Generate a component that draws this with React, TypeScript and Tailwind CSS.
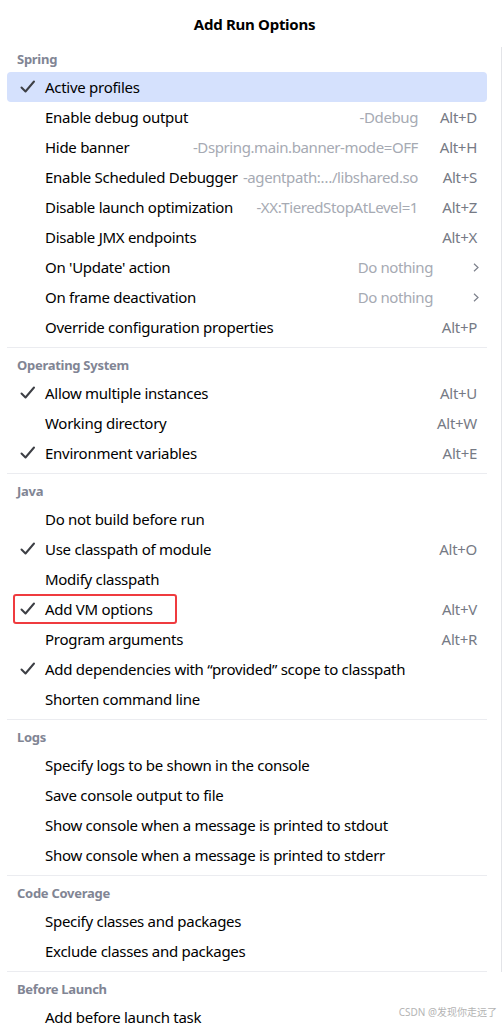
import type { ReactNode } from "react";

type Item = {
  label: ReactNode;
  checked?: boolean;
  hint?: string;
  shortcut?: string;
  submenu?: boolean;
  selected?: boolean;
  marked?: boolean;
};

type Section = { title: string; items: Item[] };

const SECTIONS: Section[] = [
  {
    title: "Spring",
    items: [
      { label: "Active profiles", checked: true, selected: true },
      { label: "Enable debug output", hint: "-Ddebug", shortcut: "Alt+D" },
      { label: "Hide banner", hint: "-Dspring.main.banner-mode=OFF", shortcut: "Alt+H" },
      { label: "Enable Scheduled Debugger", hint: "-agentpath:\u2026/libshared.so", shortcut: "Alt+S" },
      { label: "Disable launch optimization", hint: "-XX:TieredStopAtLevel=1", shortcut: "Alt+Z" },
      { label: "Disable JMX endpoints", shortcut: "Alt+X" },
      { label: "On 'Update' action", hint: "Do nothing", submenu: true },
      { label: "On frame deactivation", hint: "Do nothing", submenu: true },
      { label: "Override configuration properties", shortcut: "Alt+P" },
    ],
  },
  {
    title: "Operating System",
    items: [
      { label: "Allow multiple instances", checked: true, shortcut: "Alt+U" },
      { label: "Working directory", shortcut: "Alt+W" },
      { label: "Environment variables", checked: true, shortcut: "Alt+E" },
    ],
  },
  {
    title: "Java",
    items: [
      { label: "Do not build before run" },
      { label: "Use classpath of module", checked: true, shortcut: "Alt+O" },
      { label: "Modify classpath" },
      { label: "Add VM options", checked: true, shortcut: "Alt+V", marked: true },
      { label: "Program arguments", shortcut: "Alt+R" },
      { label: "Add dependencies with \u201cprovided\u201d scope to classpath", checked: true },
      { label: "Shorten command line" },
    ],
  },
  {
    title: "Logs",
    items: [
      { label: "Specify logs to be shown in the console" },
      { label: "Save console output to file" },
      { label: "Show console when a message is printed to stdout" },
      { label: "Show console when a message is printed to stderr" },
    ],
  },
  {
    title: "Code Coverage",
    items: [
      { label: "Specify classes and packages" },
      { label: "Exclude classes and packages" },
    ],
  },
  {
    title: "Before Launch",
    items: [{ label: "Add before launch task" }],
  },
];

function Check() {
  return (
    <svg width="16" height="14" viewBox="0 0 16 14" fill="none">
      <path d="M1.5 7.5 L5.5 11.5 L14 1.5" stroke="#3d3f45" strokeWidth="2" strokeLinecap="round" strokeLinejoin="round" />
    </svg>
  );
}

function Chevron() {
  return (
    <svg width="6" height="9" viewBox="0 0 6 9" fill="none">
      <path d="M1 0.8 L5 4.5 L1 8.2" stroke="#7d818c" strokeWidth="1.2" />
    </svg>
  );
}

function Row({ item }: { item: Item }) {
  return (
    <div
      className={`relative flex h-[30px] items-center rounded-[4px] pr-[10px] ${item.selected ? "bg-[#d5e1fd]" : ""}`}
    >
      <div className="flex w-[38px] shrink-0 justify-center pl-[4px]">{item.checked && <Check />}</div>
      <span className="min-w-0 flex-1 whitespace-nowrap text-black">{item.label}</span>
      {item.hint && (
        <span
          className={`shrink-0 whitespace-nowrap tracking-[-0.4px] text-[#a6aab3] ${item.submenu ? "mr-[40px]" : ""}`}
        >
          {item.hint}
        </span>
      )}
      {item.shortcut && (
        <span className="w-[59px] shrink-0 whitespace-nowrap text-right text-[#767a85]">{item.shortcut}</span>
      )}
      {item.submenu && (
        <span className="mr-[-2px] flex">
          <Chevron />
        </span>
      )}
      {item.marked && (
        <div className="pointer-events-none absolute left-[6px] top-0 h-[30px] w-[164px] rounded-[3px] border-[2.5px] border-[#ef3b3f]" />
      )}
    </div>
  );
}

export default function App() {
  return (
    <main
      className="relative h-[1026px] w-[503px] overflow-hidden bg-white text-[15px] tracking-[-0.28px]"
      style={{ fontFamily: '"Noto Sans", "Noto Sans CJK SC", sans-serif' }}
    >
      <h1 className="h-[42px] pl-[6px] pt-[14px] text-center text-[15px] font-bold leading-[20px] text-black">
        Add Run Options
      </h1>

      <div className="pl-[7px] pr-[16px]">
        {SECTIONS.map((sec, i) => (
          <section key={sec.title} className={i > 0 ? "mt-[5px] border-t border-[#ebecf0]" : ""}>
            <div className="h-[30px] pl-[10px] pt-[8px] text-[13px] font-bold leading-[18px] text-[#818594]">
              {sec.title}
            </div>
            {sec.items.map((it, j) => (
              <Row key={j} item={it} />
            ))}
          </section>
        ))}
      </div>

      <div className="absolute right-[1px] top-[47px] h-[925px] w-px bg-[#e3e4e8]" />
      <div className="absolute bottom-[6px] right-[6px] text-[10px] tracking-normal text-[#b4b4b4]">
        CSDN @发现你走远了
      </div>
    </main>
  );
}
